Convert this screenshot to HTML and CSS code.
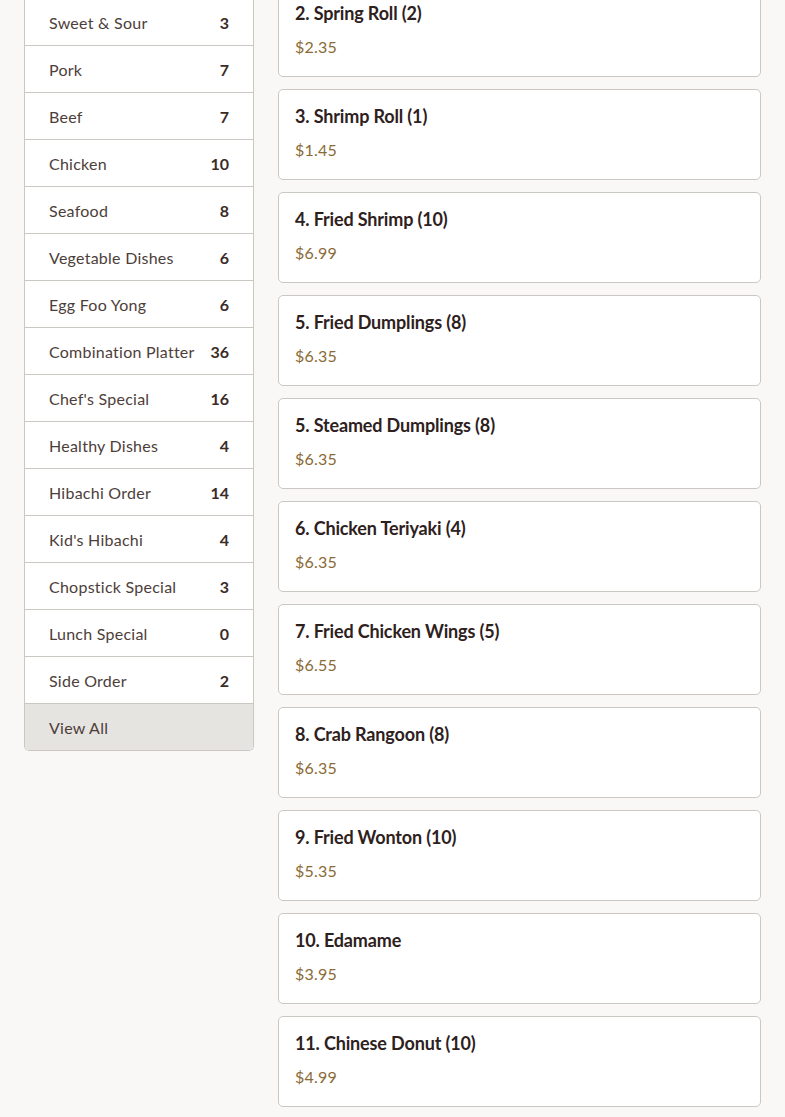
FILE: index.html
```html
<!DOCTYPE html>
<html lang="en">
<head>
<meta charset="utf-8">
<title>Menu</title>
<link rel="stylesheet" href="styles.css">
</head>
<body>
<div class="page">
  <aside class="sidebar">
    <ul class="cats">
      <li class="cat"><span class="cat-name">Sweet &amp; Sour</span><span class="cat-count">3</span></li>
      <li class="cat"><span class="cat-name">Pork</span><span class="cat-count">7</span></li>
      <li class="cat"><span class="cat-name">Beef</span><span class="cat-count">7</span></li>
      <li class="cat"><span class="cat-name">Chicken</span><span class="cat-count">10</span></li>
      <li class="cat"><span class="cat-name">Seafood</span><span class="cat-count">8</span></li>
      <li class="cat"><span class="cat-name">Vegetable Dishes</span><span class="cat-count">6</span></li>
      <li class="cat"><span class="cat-name">Egg Foo Yong</span><span class="cat-count">6</span></li>
      <li class="cat"><span class="cat-name">Combination Platter</span><span class="cat-count">36</span></li>
      <li class="cat"><span class="cat-name">Chef's Special</span><span class="cat-count">16</span></li>
      <li class="cat"><span class="cat-name">Healthy Dishes</span><span class="cat-count">4</span></li>
      <li class="cat"><span class="cat-name">Hibachi Order</span><span class="cat-count">14</span></li>
      <li class="cat"><span class="cat-name">Kid's Hibachi</span><span class="cat-count">4</span></li>
      <li class="cat"><span class="cat-name">Chopstick Special</span><span class="cat-count">3</span></li>
      <li class="cat"><span class="cat-name">Lunch Special</span><span class="cat-count">0</span></li>
      <li class="cat"><span class="cat-name">Side Order</span><span class="cat-count">2</span></li>
      <li class="cat cat-all"><span class="cat-name">View All</span></li>
    </ul>
  </aside>
  <main class="items">
    <div class="item"><div class="item-title">2. Spring Roll (2)</div><div class="item-price">$2.35</div></div>
    <div class="item"><div class="item-title">3. Shrimp Roll (1)</div><div class="item-price">$1.45</div></div>
    <div class="item"><div class="item-title">4. Fried Shrimp (10)</div><div class="item-price">$6.99</div></div>
    <div class="item"><div class="item-title">5. Fried Dumplings (8)</div><div class="item-price">$6.35</div></div>
    <div class="item"><div class="item-title">5. Steamed Dumplings (8)</div><div class="item-price">$6.35</div></div>
    <div class="item"><div class="item-title">6. Chicken Teriyaki (4)</div><div class="item-price">$6.35</div></div>
    <div class="item"><div class="item-title">7. Fried Chicken Wings (5)</div><div class="item-price">$6.55</div></div>
    <div class="item"><div class="item-title">8. Crab Rangoon (8)</div><div class="item-price">$6.35</div></div>
    <div class="item"><div class="item-title">9. Fried Wonton (10)</div><div class="item-price">$5.35</div></div>
    <div class="item"><div class="item-title">10. Edamame</div><div class="item-price">$3.95</div></div>
    <div class="item"><div class="item-title">11. Chinese Donut (10)</div><div class="item-price">$4.99</div></div>
  </main>
</div>
</body>
</html>
```
FILE: styles.css
```css
*, *::before, *::after {
  box-sizing: border-box;
}
html, body {
  margin: 0;
  padding: 0;
  background: #f9f8f6;
  font-family: "Lato", "Noto Sans", sans-serif;
  color: #3b2c28;
}
.page {
  display: flex;
  align-items: flex-start;
  gap: 24px;
  padding: 0 24px 24px;
}
.sidebar {
  flex: 0 0 230px;
  margin-top: -1px;
  background: #fff;
  border: 1px solid #cbc8c4;
  border-top: none;
  border-radius: 0 0 5px 5px;
  overflow: hidden;
}
.cats {
  list-style: none;
  margin: 0;
  padding: 0;
}
.cat {
  display: flex;
  justify-content: space-between;
  align-items: center;
  height: 47px;
  padding: 0 24px;
  border-bottom: 1px solid #cbc8c4;
  font-size: 16px;
  letter-spacing: 0.25px;
  color: #4d3e3a;
}
.cat:last-child {
  border-bottom: none;
  height: 46px;
}
.cat-count {
  font-weight: 700;
  letter-spacing: 0;
  color: #3b2c28;
}
.cat-all {
  background: #e6e4e1;
}
.items {
  flex: 1;
  display: flex;
  flex-direction: column;
  gap: 12px;
  margin-top: -14px;
}
.item {
  background: #fff;
  border: 1px solid #cbc8c4;
  border-radius: 5px;
  padding: 15px 16px 17px;
}
.item-title {
  font-size: 18px;
  font-weight: 700;
  line-height: 22px;
  letter-spacing: -0.15px;
  color: #2e211d;
}
.item-price {
  margin-top: 11px;
  font-size: 16px;
  line-height: 24px;
  letter-spacing: 0.2px;
  color: #8a6a35;
}
```
